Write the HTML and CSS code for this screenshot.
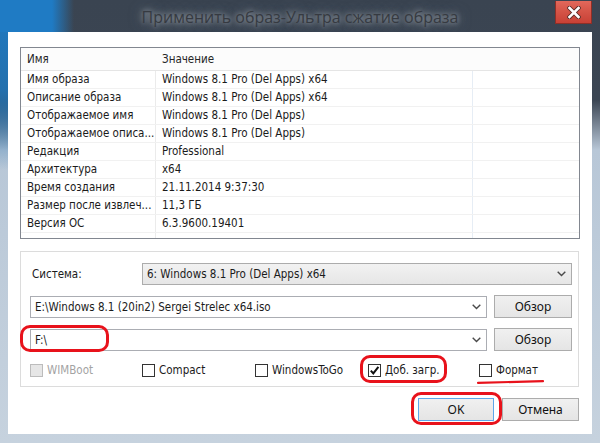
FILE: index.html
```html
<!DOCTYPE html>
<html lang="ru">
<head>
<meta charset="utf-8">
<title>Применить образ</title>
<link rel="stylesheet" href="styles.css">
</head>
<body>
<div class="window">
  <div class="titlebar">
    <div class="title">Применить образ-Ультра сжатие образа</div>
    <div class="close">
      <svg width="14" height="13" viewBox="0 0 14 13">
        <path d="M2.5 2 L11.5 11 M11.5 2 L2.5 11" stroke="#5a2a26" stroke-width="4.4" stroke-linecap="square" fill="none"/>
        <path d="M2.5 2 L11.5 11 M11.5 2 L2.5 11" stroke="#ffffff" stroke-width="2.6" stroke-linecap="square" fill="none"/>
      </svg>
    </div>
  </div>
  <div class="client">
    <div class="listview">
      <div class="lv-row lv-head"><div class="cell">Имя</div><div class="cell">Значение</div><div class="cell"></div></div>
      <div class="lv-row"><div class="cell">Имя образа</div><div class="cell">Windows 8.1 Pro (Del Apps) x64</div><div class="cell"></div></div>
      <div class="lv-row"><div class="cell">Описание образа</div><div class="cell">Windows 8.1 Pro (Del Apps) x64</div><div class="cell"></div></div>
      <div class="lv-row"><div class="cell">Отображаемое имя</div><div class="cell">Windows 8.1 Pro (Del Apps)</div><div class="cell"></div></div>
      <div class="lv-row"><div class="cell">Отображаемое описа...</div><div class="cell">Windows 8.1 Pro (Del Apps)</div><div class="cell"></div></div>
      <div class="lv-row"><div class="cell">Редакция</div><div class="cell">Professional</div><div class="cell"></div></div>
      <div class="lv-row"><div class="cell">Архитектура</div><div class="cell">x64</div><div class="cell"></div></div>
      <div class="lv-row"><div class="cell">Время создания</div><div class="cell">21.11.2014 9:37:30</div><div class="cell"></div></div>
      <div class="lv-row"><div class="cell">Размер после извлеч...</div><div class="cell">11,3 ГБ</div><div class="cell"></div></div>
      <div class="lv-row"><div class="cell">Версия ОС</div><div class="cell">6.3.9600.19401</div><div class="cell"></div></div>
    </div>

    <div class="group">
      <div class="row row-sys">
        <div class="label">Система:</div>
        <div class="combo combo-ro">
          <span class="combo-text">6: Windows 8.1 Pro (Del Apps) x64</span>
          <svg class="chev" width="9" height="6" viewBox="0 0 9 6"><path d="M0.7 0.8 L4.5 4.6 L8.3 0.8" stroke="#4a4a4a" stroke-width="1.4" fill="none"/></svg>
        </div>
      </div>
      <div class="row row-path">
        <div class="combo combo-ed">
          <span class="combo-text">E:\Windows 8.1 (20in2) Sergei Strelec x64.iso</span>
          <svg class="chev" width="9" height="6" viewBox="0 0 9 6"><path d="M0.7 0.8 L4.5 4.6 L8.3 0.8" stroke="#4a4a4a" stroke-width="1.4" fill="none"/></svg>
        </div>
        <button class="btn btn-browse">Обзор</button>
      </div>
      <div class="row row-path">
        <div class="combo combo-ed">
          <span class="combo-text">F:\</span>
          <svg class="chev" width="9" height="6" viewBox="0 0 9 6"><path d="M0.7 0.8 L4.5 4.6 L8.3 0.8" stroke="#4a4a4a" stroke-width="1.4" fill="none"/></svg>
        </div>
        <button class="btn btn-browse">Обзор</button>
      </div>
      <div class="checks">
        <div class="check disabled"><span class="box"></span><span>WIMBoot</span></div>
        <div class="check"><span class="box"></span><span>Compact</span></div>
        <div class="check"><span class="box"></span><span>WindowsToGo</span></div>
        <div class="check"><span class="box"><svg width="11" height="11" viewBox="0 0 11 11"><path d="M1.8 5.6 L4.3 8.4 L9.4 1.8" stroke="#111" stroke-width="2" fill="none"/></svg></span><span>Доб. загр.</span></div>
        <div class="check"><span class="box"></span><span>Формат</span></div>
      </div>
    </div>

    <div class="buttons">
      <button class="btn btn-ok">OK</button>
      <button class="btn btn-cancel">Отмена</button>
    </div>
  </div>
</div>

<div class="mark mark-drive"></div>
<div class="mark mark-boot"></div>
<div class="mark mark-ok"></div>
<svg class="underline" width="70" height="6" viewBox="0 0 70 6"><path d="M1 3.8 Q 30 3 66 2.2" stroke="#e8121b" stroke-width="2.2" fill="none" stroke-linecap="round"/></svg>
</body>
</html>
```

FILE: styles.css
```css
* { box-sizing: border-box; }

html, body {
  margin: 0;
  padding: 0;
}

body {
  position: relative;
  width: 600px;
  height: 443px;
  overflow: hidden;
  font-family: "DejaVu Sans Condensed", "DejaVu Sans", sans-serif;
  font-size: 11.5px;
  color: #1b1b1b;
  background:
    linear-gradient(to right, #1f7bc4 0, #1f7bc4 52px, rgba(31, 123, 196, 0) 74px) 0 0 / 100% 32px no-repeat,
    linear-gradient(to bottom, #1f7bc4 0, #2470ad 90px, rgba(59, 69, 82, 0) 170px) 0 0 / 8px 100% no-repeat,
    linear-gradient(to bottom, #3a4451 0, #3b4553 100px, #b8c7d7 150px, #c6d2de 100%);
}

.window {
  display: flex;
  flex-direction: column;
  height: 443px;
}

/* ---------- title bar ---------- */
.titlebar {
  height: 32px;
  display: grid;
  grid-template-columns: 1fr auto 1fr;
}

.title {
  grid-column: 2;
  font-family: "Open Sans", "Noto Sans", sans-serif;
  font-size: 16px;
  line-height: 34px;
  color: #363a41;
  white-space: nowrap;
  text-shadow:
    0 0 5px rgba(150, 157, 166, 0.95),
    0 0 9px rgba(135, 142, 152, 0.9),
    0 0 14px rgba(120, 128, 138, 0.8);
}

.close {
  grid-column: 3;
  justify-self: end;
  align-self: start;
  width: 37px;
  height: 23px;
  margin-top: 1px;
  margin-right: 8px;
  background: linear-gradient(to bottom, #e2685b 0, #d45346 50%, #c84136 100%);
  border: 1px solid #8f2f27;
  border-top: none;
  display: flex;
  align-items: center;
  justify-content: center;
}

/* ---------- client ---------- */
.client {
  margin: 0 8px;
  height: 402px;
  background: #ffffff;
  display: flex;
  flex-direction: column;
}

.listview {
  margin: 15px 12px 0 12px;
  height: 192px;
  border: 1px solid #828790;
  background:
    linear-gradient(#ebebeb, #ebebeb) 134px 0 / 1px 100% no-repeat,
    linear-gradient(#e6edf5, #e6edf5) 451px 0 / 1px 100% no-repeat,
    #ffffff;
}

.lv-row {
  display: grid;
  grid-template-columns: 135px 317px 1fr;
  height: 18px;
  border-bottom: 1px solid #f1f1f1;
}

.lv-head {
  height: 23px;
  border-bottom: 1px solid #e5e5e5;
  background: #fcfcfc;
}

.cell {
  padding-left: 6px;
  line-height: 17px;
  white-space: nowrap;
  overflow: hidden;
}

.lv-head .cell {
  line-height: 22px;
  color: #262626;
}

/* ---------- group ---------- */
.group {
  margin: 12px 13px 0 12px;
  height: 136px;
  border: 1px solid #dcdcdc;
  padding: 11px 6px 0 9px;
}

.row {
  display: flex;
  align-items: center;
}

.row-sys {
  height: 22px;
}

.label {
  width: 112px;
  padding-left: 2px;
}

.combo {
  position: relative;
  display: flex;
  align-items: center;
  height: 22px;
  border: 1px solid #acacac;
  padding-left: 4px;
}

.combo-ro {
  flex: 1;
  background: linear-gradient(to bottom, #f2f2f2, #e6e6e6);
}

.combo-ed {
  width: 457px;
  background: #ffffff;
  border-color: #abadb3;
}

.combo-text {
  flex: 1;
  white-space: nowrap;
}

.chev {
  margin-right: 5px;
}

.row-path {
  height: 23px;
  margin-top: 10px;
  gap: 7px;
}

.btn {
  font-family: "Noto Sans", "Open Sans", sans-serif;
  font-size: 12px;
  color: #111;
  height: 23px;
  padding: 0;
  border: 1px solid #acacac;
  background: linear-gradient(to bottom, #f0f0f0, #e5e5e5);
}

.btn-browse {
  width: 78px;
}

/* ---------- checkboxes ---------- */
.checks {
  margin-top: 12px;
  height: 14px;
  display: grid;
  grid-template-columns: 112px 113px 113px 111px 1fr;
}

.check {
  display: flex;
  align-items: center;
  gap: 4px;
  white-space: nowrap;
}

.box {
  width: 13px;
  height: 13px;
  border: 1px solid #333333;
  background: #ffffff;
  display: flex;
  align-items: center;
  justify-content: center;
}

.check.disabled {
  color: #a3a3a3;
}

.check.disabled .box {
  border-color: #bcbcbc;
  background: #e6e6e6;
}

/* ---------- bottom buttons ---------- */
.buttons {
  margin-top: 11px;
  padding-right: 13px;
  display: flex;
  justify-content: flex-end;
  gap: 8px;
}

.btn-ok {
  width: 76px;
  border-color: #5ea6e8;
}

.btn-cancel {
  width: 77px;
}

/* ---------- red annotations ---------- */
.mark {
  position: absolute;
  border: 3px solid #e8121b;
  border-radius: 10px;
}

.mark-drive {
  left: 20px;
  top: 325px;
  width: 89px;
  height: 27px;
}

.mark-boot {
  left: 360px;
  top: 355px;
  width: 87px;
  height: 28px;
}

.mark-ok {
  left: 411px;
  top: 392px;
  width: 91px;
  height: 33px;
}

.underline {
  position: absolute;
  left: 477px;
  top: 379px;
}
```
